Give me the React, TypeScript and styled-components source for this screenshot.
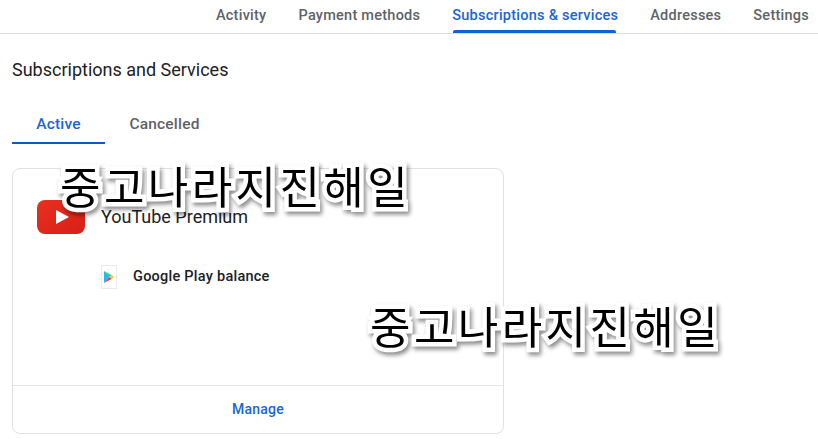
import styled, { createGlobalStyle } from "styled-components";

const navLinks = [
  { title: "Activity", active: false },
  { title: "Payment methods", active: false },
  { title: "Subscriptions & services", active: true },
  { title: "Addresses", active: false },
  { title: "Settings", active: false },
];

const GlobalStyle = createGlobalStyle`
  html, body {
    margin: 0;
    background: #ffffff;
    overflow: hidden;
  }
  body {
    font-family: "Roboto", "Liberation Sans", sans-serif;
  }
`;

const App = () => {
  return (
    <Page>
      <GlobalStyle />
      <TopNav>
        {navLinks.map((link) => (
          <NavItem key={link.title} $active={link.active}>
            {link.title}
          </NavItem>
        ))}
      </TopNav>
      <Content>
        <Heading>Subscriptions and Services</Heading>
        <Tabs>
          <Tab $active>Active</Tab>
          <Tab>Cancelled</Tab>
        </Tabs>
        <Card>
          <CardBody>
            <TitleRow>
              <YoutubeLogo />
              <Title>YouTube Premium</Title>
            </TitleRow>
            <PaymentRow>
              <PlayLogo />
              <PaymentText>Google Play balance</PaymentText>
            </PaymentRow>
          </CardBody>
          <CardFooter>Manage</CardFooter>
        </Card>
      </Content>
      <Watermark $left={60} $top={159}>중고나라지진해일</Watermark>
      <Watermark $left={370} $top={299}>중고나라지진해일</Watermark>
    </Page>
  );
};

const YoutubeLogo = () => (
  <svg width="48" height="34" viewBox="0 0 48 34">
    <defs>
      <linearGradient id="yt" x1="0" y1="0" x2="1" y2="1">
        <stop offset="0" stopColor="#e8301f" />
        <stop offset="1" stopColor="#d81f17" />
      </linearGradient>
    </defs>
    <rect x="0" y="0" width="48" height="34" rx="8" fill="url(#yt)" />
    <path d="M19 10 L32 17 L19 24 Z" fill="#ffffff" />
  </svg>
);

const PlayLogo = () => (
  <PlayFrame>
    <svg width="10" height="12" viewBox="0 0 10 12">
      <path d="M0 0 L5.5 6 L0 12 Z" fill="#29b6e8" />
      <path d="M0 0 L7.5 4 L5.5 6 Z" fill="#3ec77a" />
      <path d="M0 12 L7.5 8 L5.5 6 Z" fill="#e8374c" />
      <path d="M7.5 4 L10 6 L7.5 8 L5.5 6 Z" fill="#fbc02d" />
    </svg>
  </PlayFrame>
);

const Page = styled.div`
  position: relative;
  width: 818px;
  height: 439px;
  overflow: hidden;
  background: #ffffff;
`;

const TopNav = styled.nav`
  display: flex;
  justify-content: flex-end;
  gap: 32px;
  height: 33px;
  padding-right: 9px;
  border-bottom: 1px solid #dadce0;
`;

const NavItem = styled.a<{ $active?: boolean }>`
  position: relative;
  display: block;
  box-sizing: border-box;
  height: 33px;
  padding-top: 7px;
  font-size: 14.5px;
  line-height: 18px;
  letter-spacing: 0.25px;
  white-space: nowrap;
  color: ${(p) => (p.$active ? "#1a66d6" : "#5f6368")};
  font-weight: 500;

  &::after {
    content: "";
    display: ${(p) => (p.$active ? "block" : "none")};
    position: absolute;
    left: 1px;
    right: 2px;
    bottom: 0;
    height: 3px;
    border-radius: 2px 2px 0 0;
    background: #0b63dc;
  }
`;

const Content = styled.main`
  padding: 24px 0 0 12px;
`;

const Heading = styled.h1`
  margin: 0;
  font-size: 18px;
  line-height: 24px;
  font-weight: 400;
  color: #202124;
`;

const Tabs = styled.div`
  display: flex;
  margin-top: 24px;
  height: 38px;
`;

const Tab = styled.div<{ $active?: boolean }>`
  box-sizing: border-box;
  width: 93px;
  height: 38px;
  padding-top: 8px;
  margin-right: 13px;
  text-align: center;
  font-size: 15.5px;
  line-height: 20px;
  letter-spacing: 0.2px;
  font-weight: 500;
  color: ${(p) => (p.$active ? "#1a66d6" : "#5f6368")};
  border-bottom: 2px solid ${(p) => (p.$active ? "#0b57cf" : "transparent")};
`;

const Card = styled.section`
  display: flex;
  flex-direction: column;
  box-sizing: border-box;
  width: 492px;
  height: 266px;
  margin-top: 24px;
  border: 1px solid #dfe1e5;
  border-radius: 8px;
`;

const CardBody = styled.div`
  flex: 1;
  padding: 31px 0 0 24px;
`;

const TitleRow = styled.div`
  display: flex;
  align-items: center;
  gap: 16px;
`;

const Title = styled.div`
  font-size: 18px;
  line-height: 24px;
  color: #202124;
`;

const PaymentRow = styled.div`
  display: flex;
  align-items: center;
  gap: 16px;
  margin: 31px 0 0 64px;
`;

const PlayFrame = styled.div`
  display: flex;
  align-items: center;
  justify-content: center;
  box-sizing: border-box;
  width: 16px;
  height: 24px;
  border: 1px solid #e8eaed;
`;

const PaymentText = styled.div`
  font-size: 14.5px;
  line-height: 20px;
  letter-spacing: 0.25px;
  font-weight: 500;
  color: #202124;
`;

const CardFooter = styled.div`
  height: 47px;
  line-height: 47px;
  text-align: center;
  font-size: 14px;
  letter-spacing: 0.2px;
  font-weight: 500;
  color: #1a66d6;
  border-top: 1px solid #e3e5e8;
`;

const Watermark = styled.div<{ $left: number; $top: number }>`
  position: absolute;
  left: ${(p) => p.$left}px;
  top: ${(p) => p.$top}px;
  font-family: "Noto Sans CJK KR", sans-serif;
  font-size: 44px;
  line-height: 52px;
  letter-spacing: 3.4px;
  white-space: nowrap;
  color: #000000;
  -webkit-text-stroke: 9px #ffffff;
  paint-order: stroke fill;
  filter: drop-shadow(2px 3px 2px rgba(0, 0, 0, 0.45));
`;

export default App;
